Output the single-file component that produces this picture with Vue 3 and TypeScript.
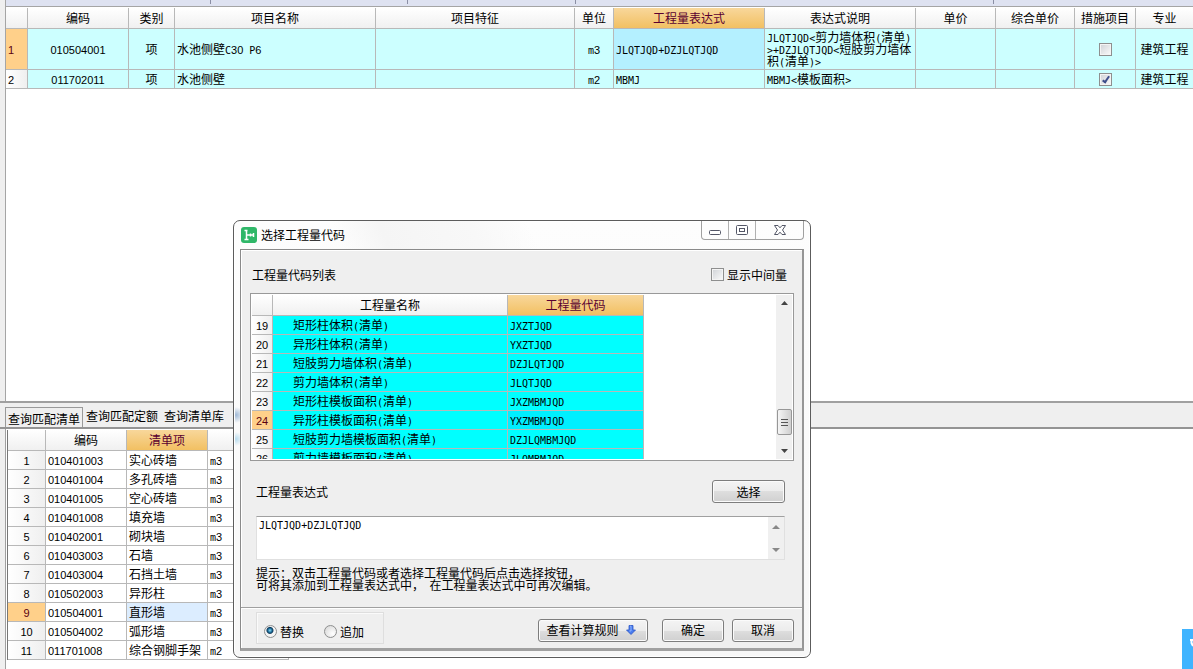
<script setup lang="ts">
import { h, ref, type FunctionalComponent } from 'vue'

interface BillRow {
  code: string
  kind: string
  name: string
  unit: string
  expr: string
  desc: string
  measure: boolean
  major: string
}
interface ListRow { code: string; name: string; unit: string }
interface CodeRow { no: number; name: string; code: string }

// Renders a string with letters and digits set on half-width cells.
const Txt: FunctionalComponent<{ t: string }> = (props) => {
  const runs = props.t.match(/[0-9]+|[\x20-\x2f\x3a-\x7e]+|[^\x20-\x7e]+/g) ?? []
  return h('span', runs.map((r) => {
    if (/^[0-9]/.test(r)) return h('span', { class: 'run-digit' }, r)
    if (/^[\x20-\x7e]/.test(r)) return h('span', { class: 'run-latin' }, r)
    return r
  }))
}
Txt.props = ['t']

const ticks = ['t1', 't2', 't3', 't4']
const billHeads = ['编码', '类别', '项目名称', '项目特征', '单位', '工程量表达式', '表达式说明', '单价', '综合单价', '措施项目', '专业']
const bills = ref<BillRow[]>([
  { code: '010504001', kind: '项', name: '水池侧壁C30 P6', unit: 'm3', expr: 'JLQTJQD+DZJLQTJQD', desc: 'JLQTJQD<剪力墙体积(清单)>+DZJLQTJQD<短肢剪力墙体积(清单)>', measure: false, major: '建筑工程' },
  { code: '011702011', kind: '项', name: '水池侧壁', unit: 'm2', expr: 'MBMJ', desc: 'MBMJ<模板面积>', measure: true, major: '建筑工程' },
])

const tabs = ['查询匹配清单', '查询匹配定额', '查询清单库']
const activeTab = ref(0)
const list: ListRow[] = [
  { code: '010401003', name: '实心砖墙', unit: 'm3' },
  { code: '010401004', name: '多孔砖墙', unit: 'm3' },
  { code: '010401005', name: '空心砖墙', unit: 'm3' },
  { code: '010401008', name: '填充墙', unit: 'm3' },
  { code: '010402001', name: '砌块墙', unit: 'm3' },
  { code: '010403003', name: '石墙', unit: 'm3' },
  { code: '010403004', name: '石挡土墙', unit: 'm3' },
  { code: '010502003', name: '异形柱', unit: 'm3' },
  { code: '010504001', name: '直形墙', unit: 'm3' },
  { code: '010504002', name: '弧形墙', unit: 'm3' },
  { code: '011701008', name: '综合钢脚手架', unit: 'm2' },
]
const selectedList = ref(8)

const codes: CodeRow[] = [
  { no: 19, name: '矩形柱体积(清单)', code: 'JXZTJQD' },
  { no: 20, name: '异形柱体积(清单)', code: 'YXZTJQD' },
  { no: 21, name: '短肢剪力墙体积(清单)', code: 'DZJLQTJQD' },
  { no: 22, name: '剪力墙体积(清单)', code: 'JLQTJQD' },
  { no: 23, name: '矩形柱模板面积(清单)', code: 'JXZMBMJQD' },
  { no: 24, name: '异形柱模板面积(清单)', code: 'YXZMBMJQD' },
  { no: 25, name: '短肢剪力墙模板面积(清单)', code: 'DZJLQMBMJQD' },
  { no: 26, name: '剪力墙模板面积(清单)', code: 'JLQMBMJQD' },
]
const selectedCode = ref(24)
const showMiddle = ref(false)
const expression = ref('JLQTJQD+DZJLQTJQD')
const mode = ref('replace')

function pick() {
  const row = codes.find((c) => c.no === selectedCode.value)
  if (row) expression.value += '+' + row.code
}
</script>

<template>
  <div class="page">
    <section class="upper">
      <div class="ruler"><span v-for="t in ticks" :key="t" :class="t"></span></div>
      <table class="grid bill">
        <colgroup>
          <col v-for="n in 12" :key="n" :class="'b' + n">
        </colgroup>
        <thead>
          <tr>
            <th></th>
            <th v-for="(t, i) in billHeads" :key="t" :class="{ hot: i === 5 }">{{ t }}</th>
          </tr>
        </thead>
        <tbody>
          <tr v-for="(r, i) in bills" :key="r.code" :class="{ tall: i === 0 }">
            <td class="no" :class="{ on: i === 0 }"><Txt :t="String(i + 1)" /></td>
            <td class="mid"><Txt :t="r.code" /></td>
            <td class="mid">{{ r.kind }}</td>
            <td><Txt :t="r.name" /></td>
            <td></td>
            <td class="mid"><Txt :t="r.unit" /></td>
            <td :class="{ cur: i === 0 }"><Txt :t="r.expr" /></td>
            <td class="wrap"><Txt :t="r.desc" /></td>
            <td></td>
            <td></td>
            <td class="mid"><input v-model="r.measure" type="checkbox" class="check" :aria-label="'措施项目 ' + r.code"></td>
            <td class="mid">{{ r.major }}</td>
          </tr>
        </tbody>
      </table>
    </section>

    <section class="lower">
      <div class="tabs" role="tablist">
        <button v-for="(t, i) in tabs" :key="t" type="button" role="tab" class="tab" :class="{ active: activeTab === i }" @click="activeTab = i">{{ t }}</button>
      </div>
      <div class="sheet">
        <table class="grid list">
          <colgroup><col class="l1"><col class="l2"><col class="l2"><col class="l2"></colgroup>
          <thead>
            <tr><th></th><th>编码</th><th class="hot">清单项</th><th></th></tr>
          </thead>
          <tbody>
            <tr v-for="(r, i) in list" :key="r.code" @click="selectedList = i">
              <td class="no mid" :class="{ on: selectedList === i }"><Txt :t="String(i + 1)" /></td>
              <td><Txt :t="r.code" /></td>
              <td :class="{ cur: selectedList === i }">{{ r.name }}</td>
              <td><Txt :t="r.unit" /></td>
            </tr>
          </tbody>
        </table>
      </div>
    </section>

    <div class="dialog" role="dialog" aria-label="选择工程量代码">
      <header class="title">
        <svg class="logo" width="16" height="16" viewBox="0 0 16 16">
          <rect width="16" height="16" rx="3" fill="#2fb768" />
          <path d="M3.500 3.500h3M5.500 3.500v9M3.500 12.500h4M5.500 8h7M9.500 6.500v3M12.500 6v4" fill="none" stroke="#fff" stroke-width="1.500" />
        </svg>
        <span class="caption">选择工程量代码</span>
        <div class="winbtns">
          <button type="button" aria-label="最小化">
            <svg width="14" height="12" viewBox="0 0 14 12"><rect x="1.500" y="6.500" width="11" height="4" rx="1" fill="#fff" stroke="#535666" /></svg>
          </button>
          <button type="button" aria-label="最大化">
            <svg width="14" height="12" viewBox="0 0 14 12"><rect x="1.500" y="1.500" width="11" height="9" rx="1" fill="#fff" stroke="#535666" /><rect x="4.500" y="4.500" width="5" height="3" fill="#fff" stroke="#535666" /></svg>
          </button>
          <button type="button" class="close" aria-label="关闭">
            <svg width="14" height="12" viewBox="0 0 14 12"><path d="M1.500 1.500h3.500L7 3.800 9 1.500h3.500L9.500 6l3 4.500H9L7 8.200 5 10.500H1.500L4.500 6z" fill="#fff" stroke="#535666" stroke-linejoin="round" /></svg>
          </button>
        </div>
      </header>

      <div class="body">
        <div class="top-line">
          <span>工程量代码列表</span>
          <label class="opt"><input v-model="showMiddle" type="checkbox" class="check">显示中间量</label>
        </div>

        <div class="codebox">
          <div class="clip">
            <table class="grid codes">
              <colgroup><col class="c1"><col class="c2"><col class="c3"></colgroup>
              <thead>
                <tr><th></th><th>工程量名称</th><th class="hot">工程量代码</th></tr>
              </thead>
              <tbody>
                <tr v-for="r in codes" :key="r.no" @click="selectedCode = r.no">
                  <td class="no mid" :class="{ on: selectedCode === r.no }"><Txt :t="String(r.no)" /></td>
                  <td class="indent"><Txt :t="r.name" /></td>
                  <td :class="{ cur: selectedCode === r.no }"><Txt :t="r.code" /></td>
                </tr>
              </tbody>
            </table>
          </div>
          <div class="bar">
            <svg width="7" height="4" viewBox="0 0 7 4"><path d="M0 4L3.500 0 7 4z" fill="#444" /></svg>
            <div class="track"><div class="thumb"><i></i><i></i><i></i></div></div>
            <svg width="7" height="4" viewBox="0 0 7 4"><path d="M0 0L3.500 4 7 0z" fill="#444" /></svg>
          </div>
        </div>

        <div class="expr-line">
          <label for="expr">工程量表达式</label>
          <button type="button" class="btn wide" @click="pick">选择</button>
        </div>

        <div class="exprbox">
          <textarea id="expr" v-model="expression" spellcheck="false"></textarea>
          <div class="bar small">
            <svg width="8" height="4" viewBox="0 0 8 4"><path d="M0 4L4 0 8 4z" fill="#888" /></svg>
            <svg width="8" height="4" viewBox="0 0 8 4"><path d="M0 0L4 4 8 0z" fill="#888" /></svg>
          </div>
        </div>

        <p class="hint">提示：双击工程量代码或者选择工程量代码后点击选择按钮，<br>可将其添加到工程量表达式中，&nbsp;&nbsp;在工程量表达式中可再次编辑。</p>

        <footer class="foot">
          <div class="modes">
            <label><input v-model="mode" type="radio" name="mode" value="replace">替换</label>
            <label><input v-model="mode" type="radio" name="mode" value="append">追加</label>
          </div>
          <button type="button" class="btn rule">查看计算规则
            <svg width="10" height="10" viewBox="0 0 10 10"><path d="M3 .500h4V5h2.500L5 9.500.500 5H3z" fill="#4a7df0" stroke="#2c55c4" stroke-width=".800" /><path d="M4 1.200h1V6H3.500" fill="none" stroke="#9fc0ff" stroke-width=".800" /></svg>
          </button>
          <button type="button" class="btn">确定</button>
          <button type="button" class="btn">取消</button>
        </footer>
      </div>
    </div>

    <div class="corner">
      <svg width="11" height="40" viewBox="0 0 11 40"><path d="M8 11h3M9.500 11v3l1.500 3" fill="none" stroke="#fff" stroke-width="2" /></svg>
    </div>
  </div>
</template>

<style>
body {
  margin: 0;
  background: #fff;
  overflow: hidden;
}
.run-digit {
  font-family: "Liberation Sans", sans-serif;
  font-size: 11px;
  line-height: 0;
}
.run-latin {
  font-family: "DejaVu Sans Mono", monospace;
  font-size: 10px;
  line-height: 0;
  white-space: pre-wrap;
}
</style>

<style scoped>
.page {
  position: relative;
  display: grid;
  grid-template-rows: 3fr 2fr;
  height: 100vh;
  overflow: hidden;
  background: #efefef;
  color: #000;
  font: 12px/12px "Noto Sans CJK SC", sans-serif;
}
.page *,
.page *::after { box-sizing: border-box; }
button, textarea, input { font: inherit; color: inherit; margin: 0; padding: 0; }

.upper {
  min-height: 0;
  margin-left: 5px;
  background: #fff;
  border-left: 1px solid #a5a5a5;
  overflow: hidden;
}
.ruler {
  display: flex;
  height: 7px;
  background: #dee2f1;
  border-bottom: 1px solid #a5a5a5;
}
.ruler span { height: 4px; border-right: 1px solid #8b8fa5; }
.t1 { width: 205px; }
.t2 { width: 197px; }
.t3 { width: 168px; }
.t4 { width: 418px; }

.grid {
  table-layout: fixed;
  border-spacing: 0;
}
.grid th, .grid td {
  padding: 0 0 0 2px;
  border-right: 1px solid #b8b8b8;
  border-bottom: 1px solid #b8b8b8;
  font-weight: 400;
  text-align: left;
  vertical-align: middle;
  white-space: nowrap;
  overflow: hidden;
}
.grid th {
  height: 21px;
  padding: 0;
  text-align: center;
  background: linear-gradient(#fff, #f0f0f0);
}
.grid td { height: 19px; }
.grid th.hot {
  background: linear-gradient(#f8d79b, #f2c062);
  color: #5a0030;
}
.grid td.mid { padding: 0; text-align: center; }
.grid td.no { background: linear-gradient(90deg, #fff, #efefef); }
.grid td.on { background: #ffd08a; color: #5a0010; }

.bill { width: 100%; margin-top: 1px; }
.b1 { width: 22px; }
.b2 { width: 101px; }
.b3 { width: 46px; }
.b4 { width: 201px; }
.b5 { width: 199px; }
.b6 { width: 39px; }
.b7, .b8 { width: 151px; }
.b9 { width: 80px; }
.b10 { width: 79px; }
.b11 { width: 61px; }
.bill th:last-child, .bill td:last-child { border-right: 0; }
.bill td { background: #ccffff; }
.bill tr.tall td { height: 41px; }
.bill td.cur { background: #b4f0ff; }
.bill td.wrap { white-space: normal; line-break: anywhere; }

.check {
  appearance: none;
  position: relative;
  display: inline-block;
  width: 13px;
  height: 13px;
  border: 1px solid #8e8f8f;
  background: linear-gradient(135deg, #cfd2d6, #fbfbfb);
  box-shadow: inset 0 0 0 1px #f4f4f4;
  vertical-align: middle;
}
.check:checked::after {
  content: "";
  position: absolute;
  left: 4px;
  top: 1px;
  width: 4px;
  height: 8px;
  border: solid #3e4f8c;
  border-width: 0 2px 2px 0;
  transform: rotate(35deg);
}

.lower {
  display: flex;
  flex-direction: column;
  min-height: 0;
  border-top: 2px solid #a0a0a0;
}
.tabs {
  display: flex;
  align-items: flex-start;
  height: 26px;
  padding: 4px 0 0 5px;
  border-bottom: 2px solid #949494;
}
.tab {
  height: 17px;
  padding: 0 3px;
  border: 0;
  background: none;
}
.tab.active {
  height: 20px;
  padding: 2px 2px 0;
  border: 1px solid #9a9a9a;
  border-bottom: 0;
}
.sheet {
  flex: 1;
  min-height: 0;
  margin-left: 5px;
  padding: 1px 0 0 1px;
  border-left: 1px solid #a0a0a0;
  background: #fff;
  overflow: hidden;
}
.list { width: 282px; border-left: 1px solid #777; }
.l1 { width: 38px; }
.l2 { width: 81px; }
.list td.cur { background: #dcedff; }

.dialog {
  position: absolute;
  left: 233px;
  top: 220px;
  width: 578px;
  padding: 0 6px 6px;
  border: 1px solid #5c5c5c;
  border-radius: 7px;
  background:
    radial-gradient(circle at 2px 194px, #9fb9d6, transparent 8px),
    radial-gradient(circle at 2px 218px, #b8dcee, transparent 7px),
    linear-gradient(#fdfdfd, #f7f7f7);
  box-shadow: inset 0 0 0 1px #fff;
}
.title {
  display: flex;
  align-items: center;
  height: 28px;
  background: linear-gradient(65deg, transparent 18%, #f5f5f5 26%, #f8f8f8 42%, transparent 52%);
}
.caption { flex: 1; padding-left: 4px; }
.winbtns {
  display: flex;
  align-self: flex-start;
  height: 19px;
  border: 1px solid #a0a0a0;
  border-top: 0;
  border-radius: 0 0 4px 4px;
}
.winbtns button {
  display: flex;
  align-items: center;
  justify-content: center;
  width: 27px;
  border: 0;
  border-right: 1px solid #b0b0b0;
  background: none;
}
.winbtns button.close { width: 47px; border-right: 0; }
.logo { margin-left: 1px; }

.body {
  border: 1px solid #8a8a8a;
  border-right: 2px solid #969696;
  border-bottom: 3px solid #a0a0a0;
  background: #efefef;
  box-shadow: inset 1px 1px 0 #fff;
}
.top-line {
  display: flex;
  justify-content: space-between;
  align-items: center;
  height: 43px;
  padding: 6px 15px 0 11px;
}
.opt { display: flex; align-items: center; gap: 3px; }
.codebox {
  display: flex;
  height: 168px;
  margin: 0 8px 0 9px;
  padding: 1px;
  border: 1px solid #999;
  background: #fff;
}
.clip { flex: 1; overflow: hidden; }
.codes { width: 392px; }
.c1 { width: 21px; }
.c2 { width: 235px; }
.c3 { width: 136px; }
.codes td { background: #00ffff; }
.codes td.cur { background: #00efff; }
.codes td.indent { padding-left: 20px; }
.bar {
  display: flex;
  flex-direction: column;
  align-items: center;
  width: 16px;
  padding: 6px 0;
  background: #f0f0f0;
}
.track {
  flex: 1;
  display: flex;
  flex-direction: column;
  justify-content: flex-end;
  padding-bottom: 14px;
}
.thumb {
  display: flex;
  flex-direction: column;
  align-items: center;
  justify-content: center;
  gap: 2px;
  width: 15px;
  height: 26px;
  border: 1px solid #979797;
  border-radius: 2px;
  background: linear-gradient(90deg, #f5f5f5, #cfcfcf);
}
.thumb i { width: 7px; height: 1px; background: #555; }
.expr-line {
  display: flex;
  justify-content: space-between;
  align-items: center;
  height: 55px;
  padding: 6px 17px 0 15px;
}
.btn {
  width: 62px;
  height: 23px;
  border: 1px solid #7d7d7d;
  border-radius: 3px;
  background: linear-gradient(#f4f4f4, #ececec 50%, #dedede 50%, #d0d0d0);
  box-shadow: inset 0 0 0 1px #fbfbfb;
}
.btn.wide { width: 73px; }
.exprbox {
  display: flex;
  height: 44px;
  margin: 0 17px 0 15px;
  border: 1px solid #e0e0e0;
  border-top-color: #a0a0a0;
  background: #fff;
}
textarea {
  flex: 1;
  padding: 3px 2px;
  border: 0;
  outline: 0;
  resize: none;
  background: #fff;
  font: 10px/12px "DejaVu Sans Mono", monospace;
}
.bar.small { justify-content: space-between; padding: 8px 0 7px; }
.hint {
  height: 47px;
  margin: 0;
  padding: 7px 15px 0;
}
.foot {
  display: flex;
  align-items: center;
  gap: 8px;
  height: 41px;
  padding: 4px 8px 0 15px;
  border-top: 1px solid #a0a0a0;
  box-shadow: inset 0 1px 0 #fff;
}
.modes {
  display: flex;
  align-self: flex-start;
  align-items: center;
  gap: 20px;
  width: 128px;
  height: 32px;
  margin-right: auto;
  padding: 7px 7px 0;
  border: 1px solid #dedede;
  box-shadow: inset 1px 1px 0 #fafafa;
}
.modes label { display: flex; align-items: center; gap: 3px; white-space: nowrap; }
.modes input {
  appearance: none;
  width: 13px;
  height: 13px;
  border: 1px solid #8e8f8f;
  border-radius: 50%;
  background: radial-gradient(circle at 70% 70%, #fff, #d4d4d4);
}
.modes input:checked {
  background: radial-gradient(circle at 45% 40%, #8fdcf5 0, #1c6f9c 2px, #123a5a 3px, #f4f4f4 4px);
}
.btn.rule {
  display: flex;
  align-items: center;
  justify-content: center;
  gap: 7px;
  width: 110px;
  margin-right: 6px;
  padding-right: 4px;
}

.corner {
  position: absolute;
  right: 0;
  bottom: 0;
  width: 11px;
  height: 40px;
  background: #40b4ff;
}
</style>
